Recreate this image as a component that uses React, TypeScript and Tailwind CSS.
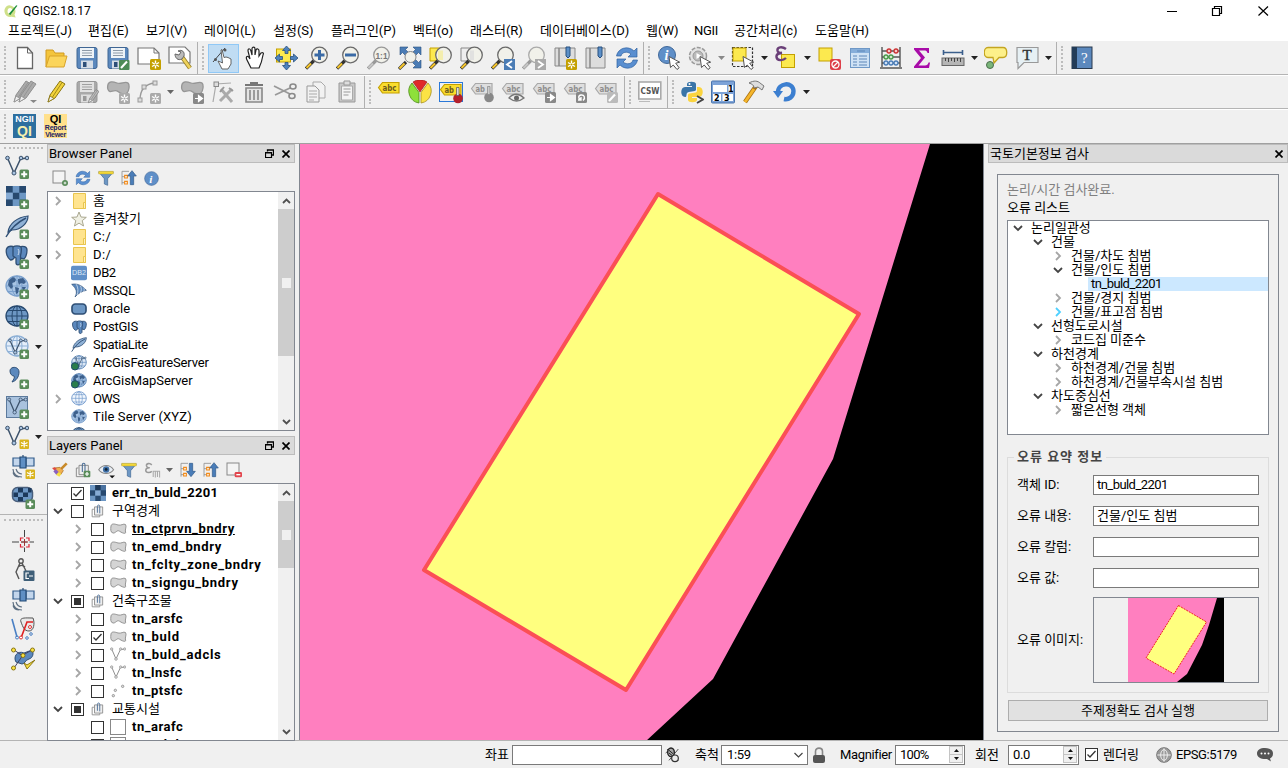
import React from "react";

type Kids = { children?: React.ReactNode };

/* ---------- icon primitives ---------- */

function Ic({ s = 24, children, className = "" }: Kids & { s?: number; className?: string }) {
  return (
    <svg width={s} height={s} viewBox="0 0 24 24" fill="none" className={"shrink-0 " + className}>
      {children}
    </svg>
  );
}

const Plus = () => (
  <g>
    <rect x="14.5" y="14.5" width="9.5" height="9.5" rx="1.5" fill="#5a8c5a" />
    <path d="M19.2 16.2v6M16.2 19.2h6" stroke="#fff" strokeWidth="2" />
  </g>
);

const Star = ({ c = "#c4a000" }: { c?: string }) => (
  <g>
    <rect x="13" y="13" width="11" height="11" rx="1.5" fill={c} />
    <path d="M18.5 14.5v8M15 16.5l7 4M22 16.5l-7 4" stroke="#fff" strokeWidth="1.4" />
    <circle cx="18.5" cy="18.5" r="1" fill={c} />
  </g>
);

const Glass = ({ handle = "#f5c52c", edge = "#333", ring = "#6a6a6a", children }: Kids & { handle?: string; edge?: string; ring?: string }) => (
  <>
    <path d="M1 22.5L9 14.500" stroke={edge} strokeWidth="3.200" />
    <path d="M1.500 22L6 17.500" stroke={handle} strokeWidth="2.200" />
    <circle cx="14.5" cy="9" r="7.800" fill="#f1f1ea" stroke={ring} strokeWidth="1.3" />
    {children}
  </>
);

const Cursor = () => (
  <path d="M12 10.5l1.5 11 2.7-2.5 3.8 4.5 2.2-1.7-3.5-4.6 4-1z" fill="#fff" stroke="#555" strokeWidth="1" />
);

const Globe = ({ fill = "#dbe7f5", line = "#5c86b8" }: { fill?: string; line?: string }) => (
  <g stroke={line} strokeWidth="1">
    <ellipse cx="12" cy="11" rx="11" ry="10" fill={fill} strokeWidth="1.3" />
    <ellipse cx="12" cy="11" rx="5" ry="10" />
    <path d="M1 11h22M3 5.5h18M3 16.5h18M12 1v20" />
  </g>
);

const Land = () => (
  <path
    d="M4 5l4-3 3 2-1 3-3 1 1 4-2 2-3-4zM13 4l5-1 3 4-2 2-3-1-2 2-1-3zM10 12l4 1-1 5-2 1zM17 12l4 0-3 5z"
    fill="#3d608c"
  />
);

const Vee = ({ c = "#3c526b", n = "#a9c4e2" }: { c?: string; n?: string }) => (
  <g stroke={c} strokeWidth="1.5">
    <path d="M2.5 3L9 18l6.5-14L22 3" />
    <g fill={n} strokeWidth="1">
      <circle cx="2.5" cy="3" r="1.8" />
      <circle cx="9" cy="18" r="2" />
      <circle cx="16" cy="3" r="1.8" />
      <circle cx="22" cy="3" r="1.8" />
    </g>
  </g>
);

const Poly = ({ f = "#cfcfcf", st = "#999" }: { f?: string; st?: string }) => (
  <path
    d="M2 4.500C3 1 7 1.500 11 3s8-2 11 0c2 2 1 8-1 10s-6 1-9-1.500-6 .500-8 0S1 8 2 4.500z"
    fill={f}
    stroke={st}
    strokeWidth="1.3"
  />
);

const Tag = ({ gray = false, short = false }: { gray?: boolean; short?: boolean }) => (
  <g>
    <path
      d="M1.500 9.500L5.500 4.500H22V15H5.500z"
      fill={gray ? "#dedede" : "#fadd2e"}
      stroke={gray ? "#a8a8a8" : "#c4a000"}
      strokeWidth="1.2"
    />
    <text
      x="5.500"
      y="12.500"
      fontSize="8"
      textLength={short ? 9.5 : 14}
      lengthAdjust="spacingAndGlyphs"
      fontWeight="700"
      fontFamily="DejaVu Sans"
      fill={gray ? "#8e8e8e" : "#6a5a20"}
    >
      {short ? "ab" : "abc"}
    </text>
  </g>
);

const Disk = ({ gray = false }: { gray?: boolean }) => (
  <g>
    <rect x="2" y="1.500" width="20" height="21" rx="2" fill={gray ? "#a9a9a9" : "#5b88bd"} stroke={gray ? "#979797" : "#3f6694"} />
    <rect x="5" y="2" width="14" height="10" fill={gray ? "#e2e2e2" : "#eef3f7"} />
    <path d="M7 4.500h10M7 7h10M7 9.500h10" stroke={gray ? "#a0a0a0" : "#8d9aa8"} />
    <rect x="6" y="14.500" width="12" height="8" fill={gray ? "#dedede" : "#d5dde6"} />
    <rect x="8" y="16" width="3.500" height="5" fill={gray ? "#999" : "#2d4f78"} />
  </g>
);

const Elephant = () => (
  <g fill="#5b88bd" stroke="#2f4f75" strokeWidth="1.300">
    <path d="M1.500 4C3 .500 7 1 10 2v9c-1 3-3 4-4.500 4C2.500 13 .500 8 1.500 4z" />
    <path d="M14 2c4-1.500 8-.500 8 3 0 4-1 7-3 9l-4-1z" />
    <path d="M8 2c2-1.500 6-1.500 8 0 1 3 0 6-.500 9v7c-1 2.500-4.500 2.500-4.500-.500V13L8 11z" />
    <path d="M13 4c1.500 2 1 4 0 6" stroke="#dce8f5" strokeWidth=".900" fill="none" />
  </g>
);

const Feather = () => (
  <g>
    <path d="M3 17C4 9 12 2 23 1c0 7-7 14-16 14z" fill="#8fb1d6" stroke="#2f4f75" strokeWidth="1.200" />
    <path d="M1 22C6 13 13 7 21 3" stroke="#2f4f75" strokeWidth="1.400" />
  </g>
);

const Chess = () => (
  <g>
    <rect x="1" y="1" width="20" height="20" fill="#6d97c4" />
    <path d="M1 1h6.700v6.700H1zM14.300 1H21v6.700h-6.700zM7.700 7.700h6.600v6.600H7.700zM1 14.300h6.700V21H1z" fill="#27496f" />
    <path d="M14.300 14.300H21V21h-6.700z" fill="#3f6694" />
    <path d="M1 7.700h6.700v6.600H1z" fill="#86abd4" />
  </g>
);

const SmallChess = () => (
  <svg width="16" height="16" viewBox="0 0 16 16" className="shrink-0">
    <rect width="16" height="16" fill="#6d97c4" />
    <path d="M5.300 0H16v5.300H5.300z" fill="#27496f" />
    <path d="M0 5.300h5.300v5.400H0z" fill="#27496f" />
    <path d="M5.300 5.300h5.400v5.400H5.300z" fill="#86abd4" />
    <path d="M5.300 0h5.400v5.300H5.300z" fill="#1d3858" />
    <path d="M10.700 0H16v5.300h-5.300z" fill="#4a72a0" />
    <path d="M5.300 10.700h5.400V16H5.300zM10.700 5.300H16v5.400h-5.300z" fill="#27496f" />
  </svg>
);

const Sat = () => (
  <g>
    <path d="M2 3h8v8H2zM15 3h8v8h-8z" fill="#c3d6ec" stroke="#335d8c" strokeWidth="1.200" />
    <path d="M9 2h6v11H9zM12 0v2" fill="#5f8fc4" stroke="#234a75" strokeWidth="1.200" />
    <path d="M2 14c0 5 4 8 9 8M2 17.500c1 3 3 4.500 6 4.500M5 14c1 3 3 5 6 5" stroke="#5d6f82" strokeWidth="1.200" />
  </g>
);

const Refresh = () => (
  <g fill="#5a8fd0" stroke="#2f62a0" strokeWidth=".700">
    <path d="M1.500 10C3 2 13-1 19 5l3-3v9h-9l3-3C12 5 7 6 6 10z" />
    <path d="M22.500 14C21 22 11 25 5 19l-3 3v-9h9l-3 3c4 3 9 2 10-2z" />
  </g>
);

const Funnel = () => (
  <g>
    <path d="M1 3h22l-8.500 10v10l-5-2V13z" fill="#6d97c4" stroke="#3f6694" />
    <path d="M1 2h22v4H1z" fill="#f3d83a" stroke="#b09a20" strokeWidth=".600" />
  </g>
);

const Info = () => (
  <g>
    <circle cx="12" cy="12" r="11" fill="#5f8fc8" stroke="#41699a" />
    <text x="8.500" y="18.500" fontSize="18" fontWeight="700" fontStyle="italic" fontFamily="Liberation Serif" fill="#fff">
      i
    </text>
  </g>
);

const TreeArrow = ({ up = false }: { up?: boolean }) => (
  <g>
    <path d="M12 2H1.500v20M1.500 10h4M1.500 19h4" stroke="#999" strokeWidth="1.400" />
    <path d="M5.500 8h4v4h-4zM5.500 17h4v4h-4z" fill="#fff" stroke="#f08a1a" strokeWidth="1.800" />
    {up ? (
      <path d="M14 22V9h-4l6.500-8L23 9h-4v13z" fill="#4a7db8" stroke="#2d5788" />
    ) : (
      <path d="M14 2v12h-4l6.500 8 6.500-8h-4V2z" fill="#4a7db8" stroke="#2d5788" />
    )}
  </g>
);

const GroupIcon = () => (
  <g stroke="#8c8c8c" strokeWidth="1.500">
    <path d="M5 9H2v13h13v-3" />
    <path d="M6 5h14v14H6z" fill="#eee" />
    <path d="M11 15V4c0-3 4-3 4 0v12" stroke="#4c6f98" strokeWidth="1.600" />
  </g>
);

const Pencil = ({ f = "#f2d33c", st = "#8a7612" }: { f?: string; st?: string }) => (
  <g>
    <path d="M4 22l2-7L16 1l5 3-10 14z" fill={f} stroke={st} />
    <path d="M8.500 17l9.500-14.500" stroke={st} strokeWidth=".800" />
    <path d="M4 22l2-6 4 2.500z" fill="#eee" stroke={st} strokeWidth=".800" />
  </g>
);

const Folder = () => (
  <svg width="16" height="16" viewBox="0 0 16 16" className="shrink-0">
    <path d="M2.500.500h12v15h-12z" fill="#ffe48f" stroke="#e9c54e" />
    <path d="M12.500 9.500h2v6h-2z" fill="#fff0b8" stroke="#e9c54e" />
  </svg>
);

/* ---------- toolbar pieces ---------- */

function Slot({ children, on = false }: Kids & { on?: boolean }) {
  return (
    <div className="flex w-[31px] shrink-0 items-center justify-center">
      <div className={on ? "flex h-[29px] w-[31px] items-center justify-center border border-[#90c8f6] bg-[#c0dcf3]" : "flex"}>
        {children}
      </div>
    </div>
  );
}

const Drop = ({ c = "#222" }: { c?: string }) => (
  <div className="flex w-3 shrink-0 items-center justify-center">
    <svg width="7" height="4" viewBox="0 0 7 4">
      <path d="M0 0h7L3.500 4z" fill={c} />
    </svg>
  </div>
);

function Group({ className, children, last = false }: Kids & { className: string; last?: boolean }) {
  return (
    <div className={"relative flex h-full shrink-0 items-center " + (last ? "" : "border-r border-[#b0b0b0] ") + className}>
      <div className="absolute left-1 top-1 bottom-1 w-0 border-l-2 border-dotted border-[#bdbdbd]" />
      {children}
    </div>
  );
}

const CloseX = () => (
  <svg width="8" height="8" viewBox="0 0 8 8">
    <path d="M.500.500l7 7M7.500.500l-7 7" stroke="#000" strokeWidth="1.700" />
  </svg>
);

const Float = () => (
  <svg width="9" height="9" viewBox="0 0 9 9" fill="none">
    <path d="M2.500 2.500V1h6v5H7" stroke="#000" strokeWidth="1.300" />
    <path d="M.500 3.500h6v5h-6zM.500 4h6" stroke="#000" strokeWidth="1.200" />
  </svg>
);

const Chev = ({ open = false, c }: { open?: boolean; c?: string }) => (
  <svg width="10" height="10" viewBox="0 0 10 10" fill="none" className="shrink-0">
    {open ? (
      <path d="M1 3l4 4 4-4" stroke={c || "#444"} strokeWidth="1.800" />
    ) : (
      <path d="M3 1l4 4-4 4" stroke={c || "#a6a6a6"} strokeWidth="1.800" />
    )}
  </svg>
);

function Check({ v = "" }: { v?: string }) {
  return (
    <div className="flex h-[13px] w-[13px] shrink-0 items-center justify-center border border-[#333] bg-white">
      {v === "part" && <div className="h-[7px] w-[7px] bg-[#333]" />}
      {v === "on" && (
        <svg width="11" height="11" viewBox="0 0 11 11" fill="none">
          <path d="M1.500 5.500L4 8l5.500-6" stroke="#333" strokeWidth="1.300" />
        </svg>
      )}
    </div>
  );
}

function PanelTitle({ children, float = true }: Kids & { float?: boolean }) {
  return (
    <div className="flex h-[19px] shrink-0 items-center border border-[#bcbcbc] bg-[#dadada] pl-px">
      <span className="flex-1">{children}</span>
      <div className="flex items-center gap-2 pr-1">
        {float && <Float />}
        <CloseX />
      </div>
    </div>
  );
}

function ScrollBar({ thumb }: { thumb: string }) {
  return (
    <div className="flex w-4 shrink-0 flex-col items-center bg-[#f0f0f0]">
      <div className="flex h-[17px] shrink-0 items-center">
        <svg width="9" height="6" viewBox="0 0 9 6" fill="none">
          <path d="M1 5l3.500-3.500L8 5" stroke="#505050" strokeWidth="1.800" />
        </svg>
      </div>
      <div className={"flex w-full items-center justify-center bg-[#cdcdcd] " + thumb}>
        <div className="h-[10px] w-[9px] bg-[#f0f0f0]" />
      </div>
      <div className="flex-1" />
      <div className="flex h-[17px] shrink-0 items-center">
        <svg width="9" height="6" viewBox="0 0 9 6" fill="none">
          <path d="M1 1l3.500 3.500L8 1" stroke="#505050" strokeWidth="1.800" />
        </svg>
      </div>
    </div>
  );
}

/* ---------- browser and layer rows ---------- */

function BRow({ icon, label, exp = false, className = "" }: { icon: React.ReactNode; label: string; exp?: boolean; className?: string }) {
  return (
    <div className="flex h-[18px] shrink-0 items-center pl-[5px]">
      <div className="flex w-[18px] items-center">{exp && <Chev />}</div>
      <div className="flex w-[22px] items-center">{icon}</div>
      <span className={"whitespace-pre " + className}>{label}</span>
    </div>
  );
}

function LGroup({ label, open = true, v = "" }: { label: string; open?: boolean; v?: string }) {
  return (
    <div className="flex h-[18px] shrink-0 items-center pl-[5px]">
      <div className="flex w-[18px] items-center">{open && <Chev open />}</div>
      <div className="flex w-5 items-center"><Check v={v} /></div>
      <div className="flex w-[21px]"><Ic s={14}><GroupIcon /></Ic></div>
      <span>{label}</span>
    </div>
  );
}

function Layer({ label, kind, v = "", under = false, exp = true, className = "tracking-[0.5px]" }: { label: string; kind: string; v?: string; under?: boolean; exp?: boolean; className?: string }) {
  return (
    <div className="flex h-[18px] shrink-0 items-center pl-[25px]">
      <div className="flex w-[18px] items-center">{exp && <Chev />}</div>
      <div className="flex w-[19px] items-center"><Check v={v} /></div>
      <div className="flex w-[22px] items-center">
        {kind === "poly" && (
          <svg width="17" height="12" viewBox="0 0 17 12" fill="none">
            <path d="M1 3C1.500 0 5 1 8 2s5.500-1.800 7.500-.500c1.500 2-.800 5 0 7.500s-3.500 1-6-.800-4 2.300-6.500 1.800S.500 6.500 1 3z" fill="#d4d4d4" stroke="#949494" />
          </svg>
        )}
        {kind === "line" && <Ic s={16}><Vee c="#8f8f8f" n="#ddd" /></Ic>}
        {kind === "pt" && (
          <Ic s={16}>
            <g fill="#ddd" stroke="#888" strokeWidth="1.200">
              <circle cx="5" cy="19" r="1.800" /><circle cx="8" cy="11" r="1.800" /><circle cx="19" cy="5" r="1.800" />
            </g>
          </Ic>
        )}
        {kind === "box" && <div className="h-4 w-4 border border-[#888] bg-white" />}
      </div>
      <span className={"font-bold " + (under ? "underline " : "") + className}>{label}</span>
    </div>
  );
}

/* ---------- left dock tool button ---------- */

function Tool({ children, drop = false, inset = false }: Kids & { drop?: boolean; inset?: boolean }) {
  return (
    <div className={"flex h-[30px] shrink-0 items-center " + (inset ? "pl-[11px]" : "pl-[5px]")}>
      <Ic>{children}</Ic>
      {drop && <div className="pl-[3px]"><Drop /></div>}
    </div>
  );
}

/* ---------- error tree ---------- */

const errTree: [number, string, string][] = [
  [0, "open", "논리일관성"],
  [1, "open", "건물"],
  [2, "shut", "건물/차도 침범"],
  [2, "open", "건물/인도 침범"],
  [3, "sel", "tn_buld_2201"],
  [2, "shut", "건물/경지 침범"],
  [2, "hot", "건물/표고점 침범"],
  [1, "open", "선형도로시설"],
  [2, "shut", "코드집 미준수"],
  [1, "open", "하천경계"],
  [2, "shut", "하천경계/건물 침범"],
  [2, "shut", "하천경계/건물부속시설 침범"],
  [1, "open", "차도중심선"],
  [2, "shut", "짧은선형 객체"],
];
const indent = ["pl-1", "pl-6", "pl-11", "pl-[63px]"];

function Field({ label, value = "", className = "" }: { label: string; value?: string; className?: string }) {
  return (
    <div className="mb-[11px] flex h-5 items-center">
      <span className="w-[76px]">{label}</span>
      <div className="flex h-5 flex-1 items-center border border-[#7a7a7a] bg-white pl-[3px]">
        <span className={className}>{value}</span>
      </div>
    </div>
  );
}

const Spin = () => (
  <div className="flex h-[17px] w-[14px] flex-col items-center justify-between border border-[#c4c4c4] bg-[#f0f0f0] py-[2px]">
    <svg width="5" height="3" viewBox="0 0 5 3"><path d="M0 3h5L2.500 0z" fill="#111" /></svg>
    <div className="h-px w-full bg-[#c4c4c4]" />
    <svg width="5" height="3" viewBox="0 0 5 3"><path d="M0 0h5L2.500 3z" fill="#111" /></svg>
  </div>
);

export default function App() {
  return (
    <div className="flex h-[768px] w-[1288px] flex-col overflow-hidden whitespace-nowrap bg-[#f0f0f0] text-[13px] leading-[18px] text-black [font-family:Roboto,'Noto_Sans_CJK_KR',sans-serif]">
      {/* title bar */}
      <div className="flex h-[22px] shrink-0 items-center bg-white pl-1">
        <Ic s={14}>
          <path d="M9 2C3 3 0 8 1 14s6 9 12 8l7 1-2-5c4-6 1-15-9-16z" fill="#cfe08a" />
          <path d="M11 7c-4 0-5 3-5 6s3 5 6 4 4-9-1-10z" fill="#fff" />
          <path d="M8 17L21 2l2 1-12 16z" fill="#1f8f3a" />
        </Ic>
        <span className="flex-1 pl-[5px] text-[12px] tracking-[0.1px]">QGIS2.18.17</span>
        <svg width="104" height="12" viewBox="-4 0 104 12" fill="none" className="mr-[17px]" stroke="#000">
          <path d="M-4 6.500H6" />
          <path d="M41.500 3.500h7v7h-7zM43.500 3V1.500h7v7H49" strokeWidth="1.200" />
          <path d="M87.500 1.500l9.500 9M97 1.500l-9.500 9" strokeWidth="1.200" />
        </svg>
      </div>
      {/* menu bar */}
      <div className="flex h-[20px] shrink-0 items-center border-b border-[#f0f0f0] bg-white pb-[2px] pl-2">
        <span className="w-[80px]">프로젝트(J)</span>
        <span className="w-[58px] tracking-[0.15px]">편집(E)</span>
        <span className="w-[58px]">보기(V)</span>
        <span className="w-[69px]">레이어(L)</span>
        <span className="w-[58px]">설정(S)</span>
        <span className="w-[82px]">플러그인(P)</span>
        <span className="w-[57px]">벡터(o)</span>
        <span className="w-[70px]">래스터(R)</span>
        <span className="w-[106px]">데이터베이스(D)</span>
        <span className="w-[48px]">웹(W)</span>
        <span className="w-[40px] tracking-[-0.3px]">NGII</span>
        <span className="w-[81px]">공간처리(c)</span>
        <span>도움말(H)</span>
      </div>

      {/* toolbar 1 */}
      <div className="flex h-[33px] shrink-0 items-center border-b border-[#b4b4b4]">
        <Group className="w-[198px] pl-[9px]">
          <Slot><Ic><path d="M4.500 1.500h10l5 5.500v15.500h-15z" fill="#fff" stroke="#666" strokeWidth="1.300" /><path d="M14.500 1.500v5.500h5" stroke="#666" /></Ic></Slot>
          <Slot><Ic><path d="M2 21V4h7l2 3h9v3" fill="#f4c53c" stroke="#d09a20" /><path d="M2 21l3.500-11H23l-3 11z" fill="#fbd55c" stroke="#d8a32a" /></Ic></Slot>
          <Slot><Ic><Disk /></Ic></Slot>
          <Slot><Ic><Disk /><rect x="13" y="14" width="10.500" height="10" rx="1" fill="#4d8a55" /><path d="M15 22l6-6.500" stroke="#fff" strokeWidth="2" /></Ic></Slot>
          <Slot><Ic><path d="M1 2h16l5 5v11H1z" fill="#fff" stroke="#777" strokeWidth="1.200" /><path d="M17 2v5h5" stroke="#777" /><Star /></Ic></Slot>
          <Slot><Ic><path d="M1 1h16l5 5v11H1z" fill="#fff" stroke="#777" strokeWidth="1.200" /><path d="M14 11l8 11" stroke="#97802a" strokeWidth="4.500" /><path d="M14 11l8 11" stroke="#eed25c" strokeWidth="2.800" /><path d="M7 8l4 1 2-3-3-1c4-2 7 1 6 5l-2 3c-4 2-7-1-7-5z" fill="#bbb" stroke="#666" /></Ic></Slot>
        </Group>
        <Group className="w-[446px] pl-[10px]">
          <Slot on><Ic><path d="M1 16L13 2" stroke="#333" strokeWidth=".900" /><circle cx="13" cy="4" r="1.500" fill="#555" /><circle cx="3.500" cy="13.500" r="1.500" fill="#555" /><path d="M10 3.500l2 8 2-.500 2 .500 3 1.500v5l-3 5h-6l-4-8 2.500 1 2 1-1.500-13z" fill="#fff" stroke="#555" strokeWidth=".900" /></Ic></Slot>
          <Slot><Ic><path d="M8 22L4 14c-2-4 1-5 3-1L5 5c0-3 2-3 3 0l1 4V3c0-2.500 3-2.500 3 0v6l1-5c1-2 3-1 3 1v5l2-3c2-1 3 0 2 2-1 6-2 9-4 13z" fill="#fff" stroke="#222" strokeWidth="1.200" /></Ic></Slot>
          <Slot><Ic><rect x="2.500" y="3" width="14" height="13" fill="#fce94f" stroke="#c4a000" /><path d="M12.500 0l4 4.500h-2.500v3h-3v-3H8.500zM12.500 24l4-4.500h-2.500v-3h-3v3H8.500zM1 12l4.500-4v2.500h3v3h-3V16zM24 12l-4.500-4v2.500h-3v3h3V16z" fill="#4f82bd" stroke="#28507f" strokeWidth=".800" /></Ic></Slot>
          <Slot><Ic><Glass><path d="M14.500 4v10M9.500 9h10" stroke="#3a6aa5" strokeWidth="3" /></Glass></Ic></Slot>
          <Slot><Ic><Glass><path d="M9 9h11" stroke="#3a6aa5" strokeWidth="3" /></Glass></Ic></Slot>
          <Slot><Ic><Glass handle="#c5c5c5" edge="#999" ring="#999"><text x="8.500" y="12.500" fontSize="9" textLength="12" lengthAdjust="spacingAndGlyphs" fontWeight="700" fontFamily="Liberation Sans" fill="#777">1:1</text></Glass></Ic></Slot>
          <Slot><Ic><path d="M2 1h8L7.500 3.500 11 7 8 10 4.500 6.500 2 9zM23 1h-8l2.500 2.500L14 7l3 3 3.500-3.500L23 9zM23 22h-8l2.500-2.500L14 16l3-3 3.500 3.500L23 14z" fill="#4b7cb5" stroke="#28507f" strokeWidth=".600" /><path d="M1 23l7-7" stroke="#333" strokeWidth="3.200" /><path d="M1.500 22.500l5-5" stroke="#f5c52c" strokeWidth="2.200" /><circle cx="12.500" cy="11" r="5.500" fill="#f1f1ea" stroke="#888" /></Ic></Slot>
          <Slot><Ic><path d="M1 2h10v13H1z" fill="#fce94f" stroke="#c4a000" /><Glass><path d="M9 4.500h5v9.500H9z" fill="#f5ee9e" opacity=".8" /></Glass></Ic></Slot>
          <Slot><Ic><path d="M1 2h10v13H1z" fill="#eee" stroke="#888" /><Glass><path d="M10 4.500h4V14h-4z" fill="#ddd" opacity=".8" /></Glass></Ic></Slot>
          <Slot><Ic><Glass /><rect x="13" y="13" width="11" height="11" fill="#4b7cb5" /><path d="M21 15l-5 3.500 5 3.500" stroke="#fff" strokeWidth="1.800" /></Ic></Slot>
          <Slot><Ic><Glass handle="#c5c5c5" edge="#999" ring="#aaa" /><rect x="13" y="13" width="11" height="11" fill="#aaa" /><path d="M16 15l5 3.500-5 3.500" stroke="#fff" strokeWidth="1.800" /></Ic></Slot>
          <Slot><Ic><path d="M2 2h4v18H2zM6 2h16v18H6z" fill="#ddd" stroke="#888" /><path d="M13 1h4v9l-2 2-2-2z" fill="#5b8fc8" stroke="#28507f" /><Star /></Ic></Slot>
          <Slot><Ic><path d="M2 2h4v20H2zM6 2h15v20H6z" fill="#ddd" stroke="#888" /><path d="M14 1h4v9l-2 2-2-2z" fill="#5b8fc8" stroke="#28507f" /></Ic></Slot>
          <Slot><Ic><Refresh /></Ic></Slot>
        </Group>
        <Group className="w-[413px] pl-[9px]">
          <Slot><Ic><circle cx="10" cy="9" r="8.500" fill="#5f8fc8" stroke="#41699a" /><text x="7.500" y="14" fontSize="14" fontWeight="700" fontStyle="italic" fontFamily="Liberation Serif" fill="#fff">i</text><Cursor /></Ic></Slot>
          <Slot><Ic><circle cx="10" cy="10" r="8.500" fill="#e3e3e3" stroke="#999" strokeWidth="1.500" strokeDasharray="4 1.500" /><circle cx="10" cy="10" r="5" fill="#bbb" stroke="#999" /><path d="M8.500 7l5 3-5 3z" fill="#fff" /><Cursor /></Ic></Slot>
          <Drop c="#888" />
          <Slot><Ic><path d="M1.500 1.500h20v19h-20z" stroke="#333" strokeDasharray="2.500 1.500" strokeWidth="1.200" /><rect x="2" y="2" width="13" height="13" fill="#fce94f" stroke="#c4a000" /><Cursor /></Ic></Slot>
          <Drop />
          <Slot><Ic><rect x="7.500" y="8.500" width="13" height="13" fill="#fce94f" stroke="#c4a000" /><path d="M12 3C8 0 3 1 3.500 4.500 4 7.500 8 7 8 7s-6 0-5.500 4S9 15 12 12" stroke="#6a3f78" strokeWidth="2.400" /></Ic></Slot>
          <Drop />
          <Slot><Ic><rect x="2" y="2" width="13" height="13" fill="#fce94f" stroke="#c4a000" /><rect x="13" y="13" width="11" height="11" rx="2" fill="#dd3f48" /><circle cx="18.500" cy="18.500" r="3.500" stroke="#fff" strokeWidth="1.300" /><path d="M16 21l5-5" stroke="#fff" strokeWidth="1.300" /></Ic></Slot>
          <Slot><Ic><rect x="2.500" y="2.500" width="19" height="19" fill="#cfe2f5" stroke="#6f98c6" /><path d="M3 3h18v4H3z" fill="#86aeda" /><path d="M5 10h4M5 13h4M5 16h4M5 19h4M11 10h8M11 13h8M11 16h8M11 19h8M9 5h8" stroke="#5c86b8" /></Ic></Slot>
          <Slot><Ic><path d="M3 1v20M21 1v20M1 22h22M3 5h18M3 11h18M3 17h18" stroke="#555" strokeWidth="1.400" /><g strokeWidth="1.300"><g fill="#f6c9c9" stroke="#c33"><circle cx="10" cy="5" r="2" /><circle cx="17" cy="5" r="2" /></g><g fill="#cfeccf" stroke="#4b9a4b"><circle cx="7" cy="11" r="2" /><circle cx="12" cy="11" r="2" /></g><g fill="#cfe0f5" stroke="#4a7db8"><circle cx="7" cy="17" r="2" /><circle cx="12" cy="17" r="2" /><circle cx="17" cy="17" r="2" /></g></g></Ic></Slot>
          <Slot><Ic><path d="M4 2h15v5h-1.500C17 5 16 4.500 14 4.500H9l6 7-6.500 8H15c2 0 3-1 3.500-3H20L19 22H4v-1.500l7-8.500-7-8.500z" fill="#a80ca8" /></Ic></Slot>
          <Slot><Ic><path d="M2 6.500h20M2.500 4v5M21.500 4v5" stroke="#3b5f8c" strokeWidth="1.600" /><rect x="1" y="12" width="22" height="7.500" fill="#b5b5b5" stroke="#666" /><path d="M4.500 12v3M7.500 12v4M10.500 12v3M13.500 12v4M16.500 12v3M19.500 12v4" stroke="#444" /></Ic></Slot>
          <Drop />
          <Slot><Ic><path d="M4 1.500h15c5 0 5 10 0 10h-4l-5 5.500-1-5.500H4c-5 0-5-10 0-10z" fill="#fdf08a" stroke="#c4a520" strokeWidth="1.300" /><circle cx="6" cy="19" r="3.500" fill="#79b579" stroke="#4c6e4c" /></Ic></Slot>
          <Slot><Ic><path d="M2 1.500h21v15H9l-6 6v-6H2z" fill="#e6f0f4" stroke="#999" strokeWidth="1.200" /><text x="7.500" y="14" fontSize="15" fontFamily="Liberation Serif" fill="#333" stroke="#333" strokeWidth=".400">T</text></Ic></Slot>
          <Drop />
        </Group>
        <Group last className="pl-[9px]">
          <Slot><Ic><rect x="2" y="1" width="20" height="21.500" fill="#5b88bd" stroke="#28394d" /><path d="M2 1h5v21.500H2z" fill="#233c58" /><text x="11" y="17" fontSize="15" fontFamily="Liberation Serif" fill="#fff">?</text></Ic></Slot>
        </Group>
      </div>

      {/* toolbar 2 */}
      <div className="flex h-[34px] shrink-0 items-center border-b border-t border-b-[#b4b4b4] border-t-white">
        <Group className="w-[365px] pl-[9px]">
          <Slot><Ic><g transform="translate(-3 0)"><Pencil f="#aaa" st="#8f8f8f" /></g><g transform="translate(2 0)"><Pencil f="#aaa" st="#8f8f8f" /></g><path d="M17 20h7l-3.500 3z" fill="#888" /></Ic></Slot>
          <Slot><Ic><Pencil /></Ic></Slot>
          <Slot><Ic><Disk gray /><g transform="translate(11 9) scale(.62)"><Pencil f="#bbb" st="#777" /></g></Ic></Slot>
          <Slot><Ic><Poly f="#b4b4b4" st="#969696" /><Star c="#aaa" /></Ic></Slot>
          <Slot><Ic><path d="M3 20C3 10 8 4 18 3" stroke="#999" strokeWidth="1.300" /><g fill="#ddd" stroke="#999"><rect x="1" y="18" width="4" height="4" /><rect x="5" y="5" width="4" height="4" /><rect x="16" y="1" width="4" height="4" /></g><Star c="#aaa" /></Ic></Slot>
          <Drop c="#666" />
          <Slot><Ic><Poly f="#b4b4b4" st="#969696" /><rect x="13" y="13" width="11" height="11" rx="1.500" fill="#888" /><path d="M15 18.500h4M18.500 15.500l4 3-4 3z" stroke="#fff" fill="#fff" strokeWidth="1.200" /></Ic></Slot>
          <Slot><Ic><path d="M2 22L5 4l15-1" stroke="#aaa" strokeWidth="1.200" /><rect x="3" y="2" width="4.500" height="4.500" fill="#ddd" stroke="#888" /><path d="M10 9l11 13M21 9L9 21" stroke="#aaa" strokeWidth="3" /><path d="M13 7l-4 5M18 8l4 3" stroke="#999" strokeWidth="2" /></Ic></Slot>
          <Slot><Ic><path d="M4 8h16v14H4z" fill="#e4e4e4" stroke="#888" strokeWidth="1.600" /><path d="M8 10v10M12 10v10M16 10v10" stroke="#888" strokeWidth="1.600" /><path d="M3 5h18M8 3h8" stroke="#777" strokeWidth="2" /></Ic></Slot>
          <Slot><Ic><path d="M1 6l16 8M2 15L17 8" stroke="#999" strokeWidth="1.800" /><ellipse cx="20" cy="6.500" rx="3" ry="2.500" stroke="#8a8a8a" strokeWidth="1.600" /><ellipse cx="19" cy="16" rx="3" ry="2.500" stroke="#8a8a8a" strokeWidth="1.600" /></Ic></Slot>
          <Slot><Ic><path d="M9 2h8l4 4v12H9z" fill="#f2f2f2" stroke="#aaa" /><path d="M3 6h8l4 4v12H3z" fill="#f2f2f2" stroke="#999" /><path d="M5 11h8M5 14h8M5 17h8M5 20h5" stroke="#aaa" /></Ic></Slot>
          <Slot><Ic><path d="M4 3h16v19H4z" fill="#c9c9c9" stroke="#999" /><path d="M6.500 6h11v14h-11z" fill="#f4f4f4" stroke="#aaa" /><path d="M8.500 9h7M8.500 12h7M8.500 15h5" stroke="#999" /><path d="M9 1h6v4H9z" fill="#ddd" stroke="#999" /></Ic></Slot>
        </Group>
        <Group className="w-[260px] pl-[8px]">
          <Slot><Ic className="-mt-1"><Tag /></Ic></Slot>
          <Slot><Ic><path d="M12 12L5 2a12 12 0 0 1 14 0z" fill="#e02a2a" stroke="#8d1515" strokeWidth=".600" /><path d="M11 12.500L4 3a12 12 0 0 0 7 20z" fill="#8ee03a" stroke="#4c8a15" strokeWidth=".800" /><path d="M13 12.500L20 3a12 12 0 0 1-7 20z" fill="#fbe345" stroke="#a8901a" strokeWidth=".800" /></Ic></Slot>
          <Slot><div className="flex h-5 w-6 justify-center overflow-visible border border-[#2a78d8]"><Ic className="-mt-[3px]"><Tag short /><circle cx="19" cy="18.500" r="4.800" fill="#b3202c" /><path d="M17.500 7.500h2.500v8h-2.500z" fill="#ddd" stroke="#555" strokeWidth=".700" /></Ic></div></Slot>
          <Slot><Ic className="-mt-0.5"><Tag gray short /><circle cx="19" cy="18.500" r="4.800" fill="#888" /><path d="M17.500 7.500h2.500v8h-2.500z" fill="#ccc" stroke="#888" strokeWidth=".700" /></Ic></Slot>
          <Slot><Ic className="-mt-0.5"><Tag gray /><path d="M8 19c4-5 10-5 15 0-5 4-10 4-15 0z" fill="#eee" stroke="#777" strokeWidth="1.300" /><circle cx="15.500" cy="19" r="2.500" fill="#666" /></Ic></Slot>
          <Slot><Ic className="-mt-0.5"><Tag gray /><rect x="13" y="13" width="11" height="11" rx="1.500" fill="#888" /><path d="M15 18.500h4M18.500 15.500l4 3-4 3z" stroke="#fff" fill="#fff" strokeWidth="1.200" /></Ic></Slot>
          <Slot><Ic className="-mt-0.5"><Tag gray /><rect x="13" y="13" width="11" height="11" rx="1.500" fill="#888" /><path d="M20 21.500c3-3 1-6-2-5.500s-3 4 0 4M18 18v3h-3" stroke="#fff" strokeWidth="1.400" /></Ic></Slot>
          <Slot><Ic className="-mt-0.5"><Tag gray /><rect x="13" y="13" width="11" height="11" rx="1.500" fill="#bbb" /><path d="M15 22l6-6.500" stroke="#fff" strokeWidth="2.200" /></Ic></Slot>
        </Group>
        <Group className="w-[43px] pl-[9px]">
          <Slot><Ic><rect x=".800" y="2" width="22" height="17" fill="#fff" stroke="#aaa" strokeWidth="1.600" /><text x="2.500" y="13.500" fontSize="8.500" textLength="19" lengthAdjust="spacingAndGlyphs" fontWeight="700" fontFamily="DejaVu Sans" fill="#555">CSW</text><path d="M1 21.500h11" stroke="#bbb" /></Ic></Slot>
        </Group>
        <Group last className="pl-[8px]">
          <Slot><Ic><path d="M7 4c0-3 9-3 9 0v6c0 2-8 1-9 3s0 4-2 4c-5 0-5-10 0-10h7V6H7z" fill="#3a75a8" /><path d="M17 7h2c5 0 5 10 0 10h-7v1h5v2c0 3-9 3-9 0v-5c0-3 9-1 9-4z" fill="#fbd43f" /><circle cx="9.500" cy="4" r="1" fill="#fff" /><path d="M17 16l6 3.500-6 3.500" stroke="#444" strokeWidth="1.800" /></Ic></Slot>
          <Slot><Ic><rect x=".500" y="1" width="23" height="22" rx="1" fill="#7da3d8" stroke="#4a75ad" /><path d="M2 5h14v7H2zM17.500 5H22v7h-4.500zM2 14h8v7H2zM11.500 14H22v7H11.500z" fill="#fff" /><g fontSize="8" fontWeight="700" fontFamily="DejaVu Sans" fill="#000"><text x="17" y="12">1</text><text x="3" y="21">2</text><text x="13" y="21">3</text></g></Ic></Slot>
          <Slot><Ic><path d="M3 22L14 6" stroke="#a86f10" strokeWidth="4.400" /><path d="M3 22l9-13" stroke="#f5b62c" strokeWidth="3" /><path d="M7 3c5-3 9-2 11 0l4 3-2 4-4-3-4 1C12 5 10 4 7 3z" fill="#ddd" stroke="#777" /></Ic></Slot>
          <Slot><Ic><path d="M5 12C5 3 20 1 20.500 11c0 6-5 9-9.500 8" stroke="#3c7fd0" strokeWidth="4.400" /><path d="M0 11h10l-5 7z" fill="#3c7fd0" /></Ic></Slot>
          <Drop />
        </Group>
      </div>

      {/* toolbar 3 */}
      <div className="flex h-[34px] shrink-0 items-center border-t border-t-white">
        <Group last className="pb-0.5 pl-[9px]">
          <Slot><div className="flex h-6 w-[23px] flex-col items-center bg-[#2d6f9f] [font-family:'Liberation_Sans']"><span className="text-[9px] font-bold leading-[10px] text-white">NGII</span><span className="text-[14px] font-bold leading-[14px] text-[#f6efae]">QI</span></div></Slot>
          <Slot><div className="flex h-6 w-[23px] flex-col items-center bg-[#ffe08c] [font-family:'Liberation_Sans']"><span className="text-[11px] font-bold leading-[11px] text-black">QI</span><span className="text-[7px] font-bold leading-[6px] tracking-[-0.2px] text-[#222266]">Report</span><span className="text-[7px] font-bold leading-[7px] tracking-[-0.3px] text-[#222266]">Viewer</span></div></Slot>
        </Group>
      </div>

      {/* main area */}
      <div className="flex h-[598px] shrink-0 border-b border-[#b4b4b4] border-t border-t-[#a0a0a0]">
        {/* vertical toolbar */}
        <div className="flex w-[47px] shrink-0 flex-col">
          <div className="mx-1 mb-[3px] mt-[3px] h-0 shrink-0 border-t-2 border-dotted border-[#bdbdbd]" />
          <Tool><Vee /><Plus /></Tool>
          <Tool><Chess /><Plus /></Tool>
          <Tool><Feather /><Plus /></Tool>
          <Tool drop><Elephant /><Plus /></Tool>
          <Tool drop><Globe fill="#a8c4e4" line="#7ba0cc" /><Land /><Plus /></Tool>
          <Tool><Globe fill="#6d97c4" line="#27496f" /><Plus /></Tool>
          <Tool drop><Globe fill="#e4eefa" line="#8fb1d6" /><g transform="translate(3 3) scale(.8)"><Vee /></g><Plus /></Tool>
          <Tool><path d="M5 6c0-5 9-5 9 1 0 5-3 9-7 10 2-3 3-5 2-6-2 0-4-2-4-5z" fill="#5b88bd" stroke="#2f4f75" /><Plus /></Tool>
          <Tool><rect x="1.500" y="1.500" width="21" height="21" fill="#a9c2de" stroke="#5c7a9c" /><g transform="translate(2 2) scale(.85)"><Vee /></g><Plus /></Tool>
          <Tool drop><Vee /><rect x="14.500" y="14.500" width="9.500" height="9.500" rx="1" fill="#d9b41e" /><path d="M19.200 16v6.500M16 17.500l6.500 3.500M22.500 17.500L16 21" stroke="#fff" strokeWidth="1.200" /></Tool>
          <Tool inset><Sat /><rect x="14.500" y="14.500" width="9.500" height="9.500" rx="1" fill="#d9b41e" /><path d="M19.200 16v6.500M16 17.500l6.500 3.500M22.500 17.500L16 21" stroke="#fff" strokeWidth="1.200" /></Tool>
          <Tool inset><rect x="1.500" y="2.500" width="20" height="14" rx="5" fill="#6d97c4" stroke="#4a5f7c" strokeWidth="1.500" /><path d="M7 3h5v4.500H7zM17 3h3.500v4.500H17zM2.500 7.500H7V12H2.500zM12 7.500h5V12h-5zM7 12h5v4H7z" fill="#1d3a5c" /><Plus /></Tool>
          <div className="mt-[2px] h-px shrink-0 bg-[#b4b4b4]" />
          <div className="mx-1 mb-[6px] mt-1 h-0 shrink-0 border-t-2 border-dotted border-[#bdbdbd]" />
          <div className="flex flex-col gap-[5.400px] pl-[11px] pt-[2px]">
            <Ic><path d="M13.500 1v22M1 13h22" stroke="#444" /><rect x="9" y="9" width="8.500" height="8.500" stroke="#f0f0f0" strokeWidth="2" /><path d="M9.500 12v-3h3M15 9h3v3M18 15v3h-3M12.500 18h-3v-3" stroke="#d23" strokeWidth="1.200" /><path d="M13.500 10v7M10 13h7" stroke="#a33" strokeWidth=".800" /></Ic>
            <Ic><circle cx="10" cy="3" r="2.200" stroke="#555" strokeWidth="1.400" /><path d="M9 5L5 14l3 7M11 5l4 8M7 9c2-2 5-2 7 0" stroke="#555" strokeWidth="1.400" /><rect x="12.500" y="12.500" width="11" height="10.500" rx="1" fill="#3f5f78" /><path d="M18 15h-3v5.500h3M22 18h-4" stroke="#fff" strokeWidth="1.200" /></Ic>
            <Ic><Sat /></Ic>
            <Ic><path d="M1 2l5 18" stroke="#4a80c4" strokeWidth="1.600" /><path d="M10 5c-2-5 5-4 12-4 2 5 1 13-4 13s-6-4-8-9z" fill="#e8e8e8" stroke="#555" /><path d="M10 21l6-16h6" stroke="#e02020" strokeWidth="1.600" /><g fill="#fff" stroke="#d33"><circle cx="10" cy="20.500" r="1.500" /><circle cx="19" cy="10" r="1.500" /></g><g stroke="#4a80c4"><circle cx="6" cy="20.500" r="1.500" /><circle cx="16" cy="21" r="1.300" /><circle cx="20" cy="17" r="1.300" /></g></Ic>
            <Ic><path d="M5 15c-3-5 1-12 8-9l8-3c2 3 1 8-3 9s-4 5-7 5z" fill="#5b88bd" stroke="#2f4f75" /><path d="M3 21l9-13 9-5M3 3l9 6" stroke="#446" /><g fill="#fbe345" stroke="#8a7612"><circle cx="2.500" cy="3" r="2" /><circle cx="21.500" cy="3" r="2" /><circle cx="12" cy="8.500" r="2" /><circle cx="2.500" cy="21" r="2" /><path d="M13 16l3 6 8-9-8 5z" /></g></Ic>
          </div>
        </div>

        {/* docks */}
        <div className="flex w-[248px] shrink-0 flex-col">
          <PanelTitle>Browser Panel</PanelTitle>
          <div className="flex h-[28px] shrink-0 items-center gap-[7px] pl-[5px] pt-[2px]">
            <Ic s={16}><rect x="1.500" y="1.500" width="18" height="18" fill="#f4f4f4" stroke="#888" strokeWidth="1.500" /><circle cx="19.500" cy="19.500" r="4.500" fill="#5a8c5a" /><path d="M19.500 17.500v4M17.500 19.500h4" stroke="#fff" strokeWidth="1.300" /></Ic>
            <Ic s={16}><Refresh /></Ic>
            <Ic s={16}><Funnel /></Ic>
            <Ic s={16}><TreeArrow up /></Ic>
            <Ic s={15}><Info /></Ic>
          </div>
          <div className="flex h-[240px] shrink-0 border border-[#828790] bg-white">
            <div className="flex min-w-0 flex-1 flex-col overflow-hidden">
              <BRow exp icon={<Folder />} label="홈" />
              <BRow icon={<Ic s={16}><path d="M12 1.500l3 7.500 8 .500-6.200 5 2 8-6.800-4.300L5.200 22.500l2-8L1 9.500 9 9z" fill="#f0f0e4" stroke="#aaa890" strokeWidth="1.500" /></Ic>} label="즐겨찾기" />
              <BRow exp icon={<Folder />} label="C:/" className="tracking-[0.4px]" />
              <BRow exp icon={<Folder />} label="D:/" className="tracking-[0.4px]" />
              <BRow icon={<Ic s={16}><rect y="1" width="24" height="22" rx="3" fill="#5f8fc8" /><text x="1.500" y="15.500" fontSize="9.500" textLength="21" lengthAdjust="spacingAndGlyphs" fontFamily="Liberation Sans" fill="#dce8f5">DB2</text></Ic>} label="DB2" className="tracking-[-0.4px]" />
              <BRow icon={<Ic s={16}><path d="M1 2c8-2 16 2 22 9-6 1-13 5-17 10 4-7 2-13-5-19z" fill="#5b88bd" stroke="#2f4f75" /><path d="M8 2c3 5 3 11 1 16M14 4c2 4 2 7 0 11M19 7c1 2 1 4 0 6" stroke="#dce8f5" strokeWidth="1.100" /></Ic>} label="MSSQL" className="tracking-[-0.2px]" />
              <BRow icon={<Ic s={16}><rect x="1.500" y="4.500" width="21" height="15" rx="5" fill="#6d97c4" stroke="#2f4f75" strokeWidth="2.500" /></Ic>} label="Oracle" />
              <BRow icon={<Ic s={16}><g transform="translate(1 2)"><Elephant /></g></Ic>} label="PostGIS" className="tracking-[-0.25px]" />
              <BRow icon={<Ic s={16}><Feather /></Ic>} label="SpatiaLite" className="tracking-[-0.3px]" />
              <BRow icon={<Ic s={16}><Globe /><g transform="translate(5 2) scale(.75)"><Vee /></g><circle cx="6" cy="17" r="5.500" fill="#2a7d4c" stroke="#1d4a6a" strokeWidth="1.500" /></Ic>} label="ArcGisFeatureServer" className="tracking-[-0.15px]" />
              <BRow icon={<Ic s={16}><Globe fill="#a8c4e4" /><Land /><circle cx="6" cy="17" r="5.500" fill="#2a7d4c" stroke="#1d4a6a" strokeWidth="1.500" /></Ic>} label="ArcGisMapServer" className="tracking-[-0.08px]" />
              <BRow exp icon={<Ic s={16}><Globe fill="#f2f7fd" line="#6f98cc" /></Ic>} label="OWS" className="tracking-[-0.6px]" />
              <BRow icon={<Ic s={16}><Globe fill="#a8c4e4" line="#7ba0cc" /><Land /></Ic>} label="Tile Server (XYZ)" className="tracking-[0.12px]" />
              <BRow icon={<Ic s={16}><Globe fill="#6d97c4" line="#27496f" /></Ic>} label="WCS" />
            </div>
            <ScrollBar thumb="h-[147px]" />
          </div>
          <div className="h-[5px] shrink-0" />
          <PanelTitle>Layers Panel</PanelTitle>
          <div className="flex h-[28px] shrink-0 items-center pl-[5px] pt-[2px]">
            <Ic s={16} className="mr-[7px]"><path d="M13 11l9-9" stroke="#c88a2a" strokeWidth="4" /><path d="M3 9l10 10 4-6-5-5z" fill="#f0b050" stroke="#a86a20" /><path d="M0 9l4 4 3-3-3-2z" fill="#e04a40" /><path d="M2 14l5 6 4-4-5-5z" fill="#8a60c0" /><path d="M6 19l5 3 3-4-4-3z" fill="#f4e040" /></Ic>
            <Ic s={16} className="mr-[7px]"><GroupIcon /><rect x="13" y="13" width="10" height="10" rx="1.500" fill="#5a8c5a" /><path d="M18 15v6M15 18h6" stroke="#fff" strokeWidth="1.800" /></Ic>
            <Ic s={17} className="mr-[6px]"><path d="M1 11C6 3 17 3 22 11 17 18 6 18 1 11z" fill="#e8eef5" stroke="#888" strokeWidth="1.500" /><circle cx="11.500" cy="10.500" r="4.500" fill="#3d6ea5" /><circle cx="11.500" cy="10.500" r="2" fill="#123" /><path d="M16 19h8l-4 4z" fill="#111" /></Ic>
            <Ic s={16} className="mr-[7px]"><Funnel /></Ic>
            <Ic s={17}><path d="M11 4C8 1 3 2 3.500 5.500c.500 3 4.500 2.500 4.500 2.500S2 8 2.500 12 9 15.500 11 13" stroke="#999" strokeWidth="2.200" /><path d="M13 21v-8h3v9M19 21v-8h3v9M13 13h9" stroke="#aaa" strokeWidth="1.500" /></Ic>
            <div className="ml-0.5 mr-[5px]"><Drop c="#666" /></div>
            <Ic s={16} className="mr-[7px]"><TreeArrow /></Ic>
            <Ic s={16} className="mr-[7px]"><TreeArrow up /></Ic>
            <Ic s={16}><rect x="1.500" y="1.500" width="18" height="18" fill="#f4f4f4" stroke="#888" strokeWidth="1.500" /><rect x="13" y="15" width="11" height="8" rx="2" fill="#e2464e" /><path d="M15.500 19h6" stroke="#fff" strokeWidth="2" /></Ic>
          </div>
          <div className="flex h-[258px] shrink-0 border border-[#828790] bg-white">
            <div className="flex min-w-0 flex-1 flex-col overflow-hidden">
              <div className="flex h-[18px] shrink-0 items-center pl-[23px]">
                <div className="flex w-[19px]"><Check v="on" /></div>
                <div className="flex w-[22px]"><SmallChess /></div>
                <span className="font-bold tracking-[0.35px]">err_tn_buld_2201</span>
              </div>
              <LGroup label="구역경계" />
              <Layer kind="poly" under label="tn_ctprvn_bndry" className="tracking-[0.6px]" />
              <Layer kind="poly" label="tn_emd_bndry" className="tracking-[0.65px]" />
              <Layer kind="poly" label="tn_fclty_zone_bndry" className="tracking-[0.7px]" />
              <Layer kind="poly" label="tn_signgu_bndry" className="tracking-[0.7px]" />
              <LGroup v="part" label="건축구조물" />
              <Layer kind="poly" label="tn_arsfc" />
              <Layer kind="poly" v="on" label="tn_buld" className="tracking-[0.7px]" />
              <Layer kind="line" label="tn_buld_adcls" className="tracking-[0.75px]" />
              <Layer kind="line" label="tn_lnsfc" />
              <Layer kind="pt" label="tn_ptsfc" />
              <LGroup v="part" label="교통시설" />
              <Layer kind="box" exp={false} label="tn_arafc" />
              <Layer kind="box" exp={false} label="tn_arbdy" />
            </div>
            <ScrollBar thumb="h-[67px]" />
          </div>
        </div>
        <div className="w-1 shrink-0" />

        {/* map canvas */}
        <div className="w-[685px] shrink-0 border-x border-[#828790] bg-[#ff7fbf]">
          <svg width="683" height="596" viewBox="300 144 683 596" className="block">
            <rect x="300" y="144" width="684" height="597" fill="#ff7fbf" />
            <path d="M930 144L833 459 713 679 646 741H984V144z" fill="#000" />
            <path d="M658 194L859 314 626 690 424 570z" fill="#ffff7f" stroke="#fb4f55" strokeWidth="4" strokeLinejoin="round" />
          </svg>
        </div>
        <div className="w-1 shrink-0" />

        {/* inspection panel */}
        <div className="flex w-[300px] shrink-0 flex-col">
          <PanelTitle float={false}>국토기본정보 검사</PanelTitle>
          <div className="ml-[9px] mt-[11px] flex h-[558px] w-[282px] flex-col border border-[#828790] px-[9px] pt-1.5">
            <span className="text-[#808080]">논리/시간 검사완료.</span>
            <span>오류 리스트</span>
            <div className="mt-[3px] flex h-[215px] w-[262px] shrink-0 flex-col border border-[#828790] bg-white">
              {errTree.map(([d, k, t]) => (
                <div key={t} className={"flex h-[14px] shrink-0 items-center " + indent[d]}>
                  <div className="flex w-[17px] items-center pl-px">
                    {k === "open" && <Chev open />}
                    {k === "shut" && <Chev />}
                    {k === "hot" && <Chev c="#4fd0ff" />}
                  </div>
                  <span className={k === "sel" ? "h-[14px] flex-1 bg-[#cce8ff] pl-[3px] leading-[14px] tracking-[-0.55px]" : "pl-0.5 leading-[14px]"}>{t}</span>
                </div>
              ))}
            </div>
            <fieldset className="mt-[13px] flex h-[245px] w-[262px] shrink-0 flex-col border border-[#dcdcdc] px-[9px]">
              <legend className="-ml-[3px] px-[3px] font-bold tracking-[1px] text-[#444]">오류 요약 정보</legend>
              <div className="mt-[9px] flex flex-col">
                <Field label="객체 ID:" value="tn_buld_2201" className="tracking-[-0.55px]" />
                <Field label="오류 내용:" value="건물/인도 침범" />
                <Field label="오류 칼럼:" />
                <Field label="오류 값:" />
                <div className="-mt-0.5 flex h-[86px] items-center">
                  <span className="w-[76px]">오류 이미지:</span>
                  <div className="flex h-[86px] flex-1 justify-center border border-[#828790]">
                    <svg width="96" height="84" viewBox="1128 598 96 84">
                      <rect x="1128" y="598" width="96" height="84" fill="#ff7fbf" />
                      <path d="M1217 598L1209 625 1202 645 1187 674 1177 682H1224V598z" fill="#000" />
                      <path d="M1178.500 605.500L1206.500 622 1174 674 1146 658z" fill="#ffff7f" stroke="#e22" strokeWidth="1" strokeDasharray="2 1" />
                    </svg>
                  </div>
                </div>
              </div>
            </fieldset>
            <div className="ml-px mt-[7px] flex h-[21px] w-[260px] shrink-0 items-center justify-center border border-[#adadad] bg-[#e1e1e1]">주제정확도 검사 실행</div>
          </div>
        </div>
      </div>

      {/* status bar */}
      <div className="flex flex-1 items-center pl-[485px]">
        <span className="w-[27px]">좌표</span>
        <div className="h-5 w-[150px] border border-[#7a7a7a] bg-white" />
        <Ic s={16} className="ml-[3px]"><path d="M3 3l17 18M1 9l7-6M20 3L6 20" stroke="#555" strokeWidth="1.500" /><ellipse cx="9" cy="8" rx="5" ry="6.500" fill="#aaa" stroke="#222" strokeWidth="2" /><circle cx="15" cy="17" r="5" fill="#eee" stroke="#333" strokeWidth="1.800" /><path d="M6 5l6 5M6 9l5 4" stroke="#222" strokeWidth="1.500" /></Ic>
        <span className="ml-[14px] w-[26px]">축척</span>
        <div className="flex h-5 w-[87px] items-center justify-between border border-[#7a7a7a] bg-white pl-[5px] pr-1"><span className="tracking-[-0.3px]">1:59</span><svg width="9" height="6" viewBox="0 0 9 6" fill="none"><path d="M.500 1l4 4 4-4" stroke="#444" strokeWidth="1.200" /></svg></div>
        <svg width="14" height="16" viewBox="0 0 14 16" fill="none" className="ml-1"><path d="M3.500 9V4.500c0-4.500 7-4.500 7 0V9" stroke="#888" strokeWidth="1.600" /><rect x="1" y="8" width="12" height="8" rx="2" fill="#555" /></svg>
        <span className="ml-[14px] w-[55px] tracking-[-0.35px]">Magnifier</span>
        <div className="flex h-5 w-[70px] items-center justify-between border border-[#7a7a7a] bg-white pl-1 pr-px"><span className="tracking-[-0.7px]">100%</span><Spin /></div>
        <span className="ml-[10px] w-[33px]">회전</span>
        <div className="flex h-5 w-[71px] items-center justify-between border border-[#7a7a7a] bg-white pl-1 pr-px"><span className="tracking-[-0.4px]">0.0</span><Spin /></div>
        <div className="ml-[6px] mr-[5px]"><Check v="on" /></div>
        <span className="w-[53px]">렌더링</span>
        <Ic s={16}><circle cx="12" cy="12" r="11" fill="#9a9a9a" stroke="#777" strokeWidth="1.500" /><ellipse cx="12" cy="12" rx="5" ry="8" stroke="#eee" strokeWidth="1.500" /><path d="M2 12h20M12 2v20" stroke="#eee" strokeWidth="1.500" /></Ic>
        <span className="ml-1 w-[81px] tracking-[-0.4px]">EPSG:5179</span>
        <svg width="17" height="15" viewBox="0 0 17 15"><path d="M8 1c5 0 8 2 8 5.500 0 3-1.500 4-3 5l1 3-4-2.500C4 12.500 0 10 0 6.500 0 3 3 1 8 1z" fill="#555" /><g fill="#fff"><circle cx="4.500" cy="6.500" r="1" /><circle cx="8" cy="6.500" r="1" /><circle cx="11.500" cy="6.500" r="1" /></g></svg>
      </div>
    </div>
  );
}
